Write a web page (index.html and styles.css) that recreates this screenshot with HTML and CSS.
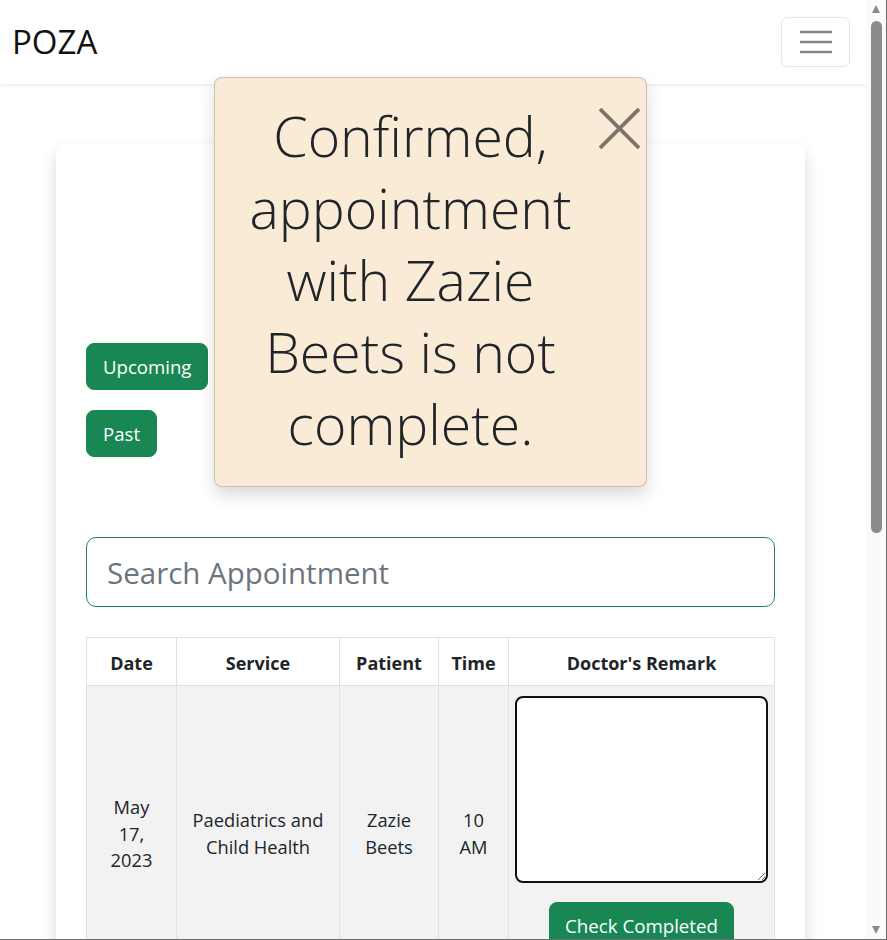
FILE: index.html
```html
<!DOCTYPE html>
<html lang="en">
<head>
<meta charset="utf-8">
<title>POZA</title>
<link rel="stylesheet" href="styles.css">
</head>
<body>
<nav class="navbar">
  <div class="brand">POZA</div>
  <button class="toggler" type="button" aria-label="Toggle navigation">
    <svg class="toggler-icon" width="32" height="24" viewBox="0 0 32 24">
      <path d="M0 2h32M0 12h32M0 22h32" stroke="#858585" stroke-width="2.6" fill="none"/>
    </svg>
  </button>
</nav>

<main class="page">
  <section class="card">
    <div class="card-head"></div>
    <div class="tabs">
      <button class="btn btn-lg" type="button">Upcoming</button>
      <button class="btn btn-lg" type="button">Past</button>
    </div>
    <input class="search" type="text" placeholder="Search Appointment">
    <table class="appts">
      <colgroup>
        <col class="c-date"><col class="c-service"><col class="c-patient"><col class="c-time"><col class="c-remark">
      </colgroup>
      <thead>
        <tr><th>Date</th><th>Service</th><th>Patient</th><th>Time</th><th>Doctor's Remark</th></tr>
      </thead>
      <tbody>
        <tr>
          <td class="td-date">May 17, 2023</td>
          <td>Paediatrics and Child Health</td>
          <td>Zazie Beets</td>
          <td class="td-time">10 AM</td>
          <td class="td-remark">
            <textarea class="remark"></textarea>
            <button class="btn btn-check" type="button">Check Completed</button>
          </td>
        </tr>
      </tbody>
    </table>
  </section>
</main>

<div class="toast" role="alert">
  <h1 class="toast-msg">Confirmed, appointment with Zazie Beets is not complete.</h1>
  <button class="toast-close" type="button" aria-label="Close">
    <svg width="41" height="41" viewBox="0 0 41 41">
      <path d="M1 1L40 40M40 1L1 40" stroke="rgba(0,0,0,0.5)" stroke-width="3.8" fill="none"/>
    </svg>
  </button>
</div>

<div class="scrollbar" aria-hidden="true">
  <div class="sb-arrow sb-up"></div>
  <div class="sb-thumb"></div>
  <div class="sb-fill"></div>
  <div class="sb-arrow sb-down"></div>
</div>
<div class="frame-bottom" aria-hidden="true"></div>
</body>
</html>
```

FILE: styles.css
```css
html, body {
  margin: 0;
  padding: 0;
}

body {
  font-family: "Open Sans", "Noto Sans", sans-serif;
  color: #212529;
  background: #fff;
}

.navbar {
  height: 84px;
  box-sizing: border-box;
  display: flex;
  align-items: center;
  justify-content: space-between;
  padding: 0 37px 0 12px;
  background: #fff;
  box-shadow: 0 2px 4px rgba(0, 0, 0, 0.075);
}

.brand {
  font-size: 33px;
  line-height: 40px;
  color: #111;
}

.toggler {
  width: 69px;
  height: 50px;
  box-sizing: border-box;
  border: 1px solid rgba(0, 0, 0, 0.1);
  border-radius: 6px;
  background: transparent;
  display: flex;
  align-items: center;
  justify-content: center;
  padding: 0;
}

.page {
  padding: 60px 0 40px 56px;
}

.card {
  width: 749px;
  box-sizing: border-box;
  padding: 30px;
  background: #fff;
  border-radius: 8px;
  box-shadow: 0 8px 16px rgba(0, 0, 0, 0.15);
}

.card-head {
  height: 169px;
}

.tabs {
  display: flex;
  flex-direction: column;
  align-items: flex-start;
  gap: 20px;
}

.btn {
  font-family: "Open Sans", "Noto Sans", sans-serif;
  background: #198754;
  color: #fff;
  border: 1px solid #198754;
  border-radius: 8px;
  cursor: pointer;
}

.btn-lg {
  font-size: 18.6px;
  line-height: 29px;
  padding: 8px 16px;
}

.search {
  display: block;
  margin-top: 80px;
  width: 100%;
  height: 70px;
  box-sizing: border-box;
  border: 1px solid #198754;
  border-radius: 10px;
  padding: 0 20px;
  font-family: "Open Sans", "Noto Sans", sans-serif;
  font-size: 29.5px;
  color: #212529;
  outline: none;
}
.search::placeholder {
  color: #6c757d;
}

.appts {
  margin-top: 30px;
  width: 100%;
  border-collapse: collapse;
  table-layout: fixed;
  text-align: center;
}

.c-date { width: 90px; }
.c-service { width: 163px; }
.c-patient { width: 99px; }
.c-time { width: 70px; }

.appts th,
.appts td {
  border: 1px solid #dee2e6;
}

.appts th {
  font-weight: 700;
  font-size: 18px;
  line-height: 27px;
  padding: 12px 6px 8px;
  background: #fff;
}

.appts td {
  background: #f2f2f2;
  font-size: 18.3px;
  line-height: 26.7px;
  padding: 10px 10px;
  vertical-align: middle;
}

.appts td.td-date {
  padding-left: 14px;
  padding-right: 14px;
}

.appts td.td-remark {
  padding: 10px 6px;
}

.remark {
  display: block;
  width: 100%;
  height: 187px;
  box-sizing: border-box;
  margin: 0;
  border: 2px solid #111;
  border-radius: 8px;
  background: #fff;
}

.btn-check {
  display: block;
  margin: 19px auto 24px;
  font-size: 18.7px;
  line-height: 30px;
  padding: 8px 15px 6px;
}

.toast {
  position: fixed;
  top: 77px;
  left: 214px;
  width: 433px;
  height: 410px;
  box-sizing: border-box;
  display: flex;
  align-items: flex-start;
  background: #faebd7;
  border: 1px solid rgba(0, 0, 0, 0.175);
  border-radius: 8px;
  box-shadow: 0 8px 16px rgba(0, 0, 0, 0.15);
  z-index: 10;
}

.toast-msg {
  flex: 1;
  margin: 0;
  padding: 22px 0 0 20px;
  font-weight: 300;
  font-size: 55.4px;
  line-height: 72px;
  text-align: center;
  color: #212529;
}

.toast-close {
  flex: none;
  width: 41px;
  height: 41px;
  margin: 30px 6px 0 13px;
  padding: 0;
  border: 0;
  background: transparent;
  cursor: pointer;
}
.toast-close svg {
  display: block;
}

/* window scrollbar (drawn over the page edge) */
.scrollbar {
  position: fixed;
  top: 0;
  right: 0;
  width: 21px;
  height: 100vh;
  box-sizing: border-box;
  border-right: 1px solid #6e6e6e;
  background: #fafafa;
  display: flex;
  flex-direction: column;
  align-items: center;
  padding: 5px 0 6px;
  z-index: 20;
}

.sb-arrow {
  width: 0;
  height: 0;
  border-left: 4.5px solid transparent;
  border-right: 4.5px solid transparent;
}
.sb-up {
  border-bottom: 8px solid #8a8a8a;
}
.sb-down {
  border-top: 8px solid #8a8a8a;
}

.sb-thumb {
  width: 11px;
  height: 512px;
  margin-top: 8px;
  border-radius: 6px;
  background: #8b8b8b;
}

.sb-fill {
  flex: 1;
}

.frame-bottom {
  position: fixed;
  left: 0;
  right: 0;
  bottom: 0;
  height: 1px;
  background: #6e6e6e;
  z-index: 21;
}
```
